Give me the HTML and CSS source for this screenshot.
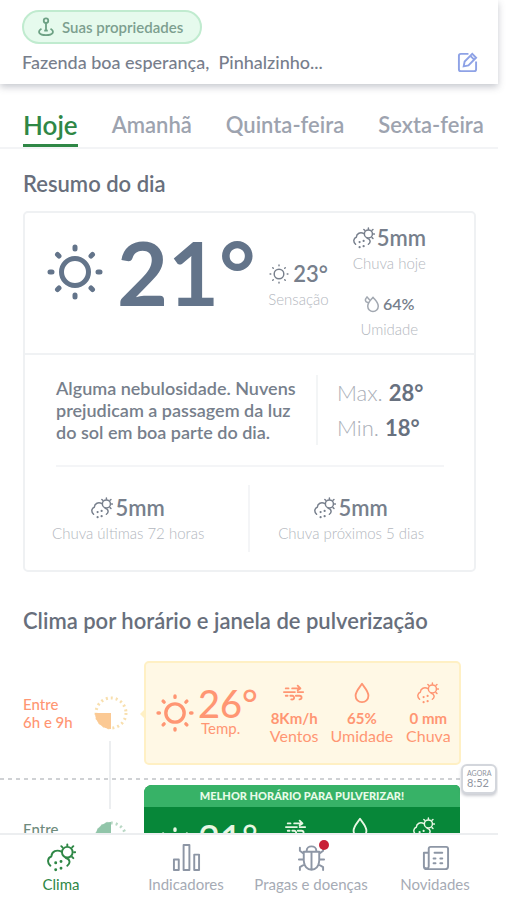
FILE: index.html
```html
<!DOCTYPE html>
<html lang="pt-BR">
<head>
<meta charset="utf-8">
<meta name="viewport" content="width=device-width, initial-scale=1">
<title>Clima</title>
<link rel="stylesheet" href="styles.css">
</head>
<body>
<svg class="sprite" aria-hidden="true">
  <symbol id="sun" viewBox="0 0 56 56">
    <circle cx="28" cy="28" r="13.500"/>
    <path class="rays" d="M28 3v2M28 51v2M3 28h2M51 28h2M10.500 10.500l1.500 1.500M44 44l1.500 1.500M45.500 10.500l-1.500 1.500M12 44l-1.500 1.500"/>
  </symbol>
  <symbol id="rain" viewBox="0 0 30 30">
    <path d="M3.500 23.500C-.5 20 1 15 4.500 14 5 8.500 10 6.500 15 9M19.500 15.500c4.500 1 5 5.500 1.500 8"/>
    <circle cx="21" cy="9.500" r="5.500"/>
    <path d="M21 3V1.500M26 4.500l1.200-1.200M28 9.500h1.200M26 14.500l1.200 1.200M16 4.500l-1.200-1.200"/>
    <path class="drops" d="M9 20.500v.1M14.500 19v.1M9 27.500v.1M14.500 26v.1"/>
  </symbol>
  <symbol id="drop" viewBox="0 0 20 24">
    <path d="M10 2C7 6.500 3 10 3 15a7 7 0 0 0 14 0c0-5-4-8.500-7-13z"/>
  </symbol>
  <symbol id="drops" viewBox="0 0 20 24">
    <path d="M12 3C9 7 5 10 5 15a7 7 0 0 0 14 0c0-5-4-8-7-12zM5 10C1 9 1 6 4 2.500L7 6"/>
  </symbol>
  <symbol id="wind" viewBox="0 0 24 20">
    <path d="M3 5h3M10 5h9M16 2l3 3-3 2M1 9h12M16 9h6M3 13h2M8 13h2c3 0 3 5-1 4M14 13h4c3 0 3 4 0 4"/>
  </symbol>
</svg>

<div class="app">
  <header class="header">
    <button class="pill" type="button">
      <svg class="pin" viewBox="0 0 20 22" aria-hidden="true"><circle cx="10" cy="4" r="2.500"/><path d="M10 6.500v9M5 13c-5 3-3 7 5 7s10-4 5-7"/><path d="M8 15h4"/></svg>
      Suas propriedades
    </button>
    <div class="place">
      <span>Fazenda boa esperança,&nbsp; Pinhalzinho...</span>
      <button class="edit" type="button" aria-label="Editar">
        <svg viewBox="0 0 22 22" aria-hidden="true"><path d="M12 2H4a2 2 0 0 0-2 2v14a2 2 0 0 0 2 2h14a2 2 0 0 0 2-2v-8"/><path d="M7 15l1-5 8-8 4 4-8 8zM14 4l4 4"/></svg>
      </button>
    </div>
  </header>

  <nav class="tabs" aria-label="Dias">
    <a class="tab tab-active" href="#hoje">Hoje</a>
    <a class="tab" href="#amanha">Amanhã</a>
    <a class="tab" href="#quinta">Quinta-feira</a>
    <a class="tab" href="#sexta">Sexta-feira</a>
  </nav>

  <main class="content">
    <h2 class="title">Resumo do dia</h2>
    <section class="summary">
      <div class="now">
        <div class="temp"><svg class="icon sun-big"><use href="#sun"/></svg><span>21°</span></div>
        <div class="stat feels">
          <div class="value"><svg class="icon sun-small"><use href="#sun"/></svg>23°</div>
          <div class="label">Sensação</div>
        </div>
        <div class="pair">
          <div class="stat">
            <div class="value"><svg class="icon rain"><use href="#rain"/></svg>5mm</div>
            <div class="label">Chuva hoje</div>
          </div>
          <div class="stat">
            <div class="value value-small"><svg class="icon drops-small"><use href="#drops"/></svg>64%</div>
            <div class="label">Umidade</div>
          </div>
        </div>
      </div>
      <div class="details">
        <div class="forecast">
          <p class="text">Alguma nebulosidade. Nuvens prejudicam a passagem da luz do sol em boa parte do dia.</p>
          <div class="range">
            <div>Max. <b>28°</b></div>
            <div>Min. <b>18°</b></div>
          </div>
        </div>
        <div class="totals">
          <div class="stat">
            <div class="value"><svg class="icon rain"><use href="#rain"/></svg>5mm</div>
            <div class="label">Chuva últimas 72 horas</div>
          </div>
          <div class="stat">
            <div class="value"><svg class="icon rain"><use href="#rain"/></svg>5mm</div>
            <div class="label">Chuva próximos 5 dias</div>
          </div>
        </div>
      </div>
    </section>

    <h2 class="title title-hours">Clima por horário e janela de pulverização</h2>
    <section class="hours">
      <div class="slot slot-warn">
        <div class="time">Entre<br>6h e 9h</div>
        <svg class="dial" viewBox="0 0 34 34" aria-hidden="true"><circle cx="17" cy="17" r="15"/><path d="M17 17v16A16 16 0 0 1 1 17z"/></svg>
        <article class="hour">
          <div class="metrics">
            <svg class="icon sun-hour"><use href="#sun"/></svg>
            <div class="degrees"><span>26°</span><small>Temp.</small></div>
            <div class="metric"><svg class="icon"><use href="#wind"/></svg><b>8Km/h</b>Ventos</div>
            <div class="metric"><svg class="icon"><use href="#drop"/></svg><b>65%</b>Umidade</div>
            <div class="metric"><svg class="icon"><use href="#rain"/></svg><b>0 mm</b>Chuva</div>
          </div>
        </article>
      </div>
      <div class="marker"><div class="clock"><small>AGORA</small>8:52</div></div>
      <div class="slot slot-best">
        <div class="time">Entre<br>9h e 12h</div>
        <svg class="dial" viewBox="0 0 34 34" aria-hidden="true"><circle cx="17" cy="17" r="15"/><path d="M17 17V1A16 16 0 0 0 1 17z"/></svg>
        <article class="hour">
          <div class="banner">MELHOR HORÁRIO PARA PULVERIZAR!</div>
          <div class="metrics">
            <svg class="icon sun-hour"><use href="#sun"/></svg>
            <div class="degrees"><span>21°</span></div>
            <div class="metric"><svg class="icon"><use href="#wind"/></svg></div>
            <div class="metric"><svg class="icon"><use href="#drop"/></svg></div>
            <div class="metric"><svg class="icon"><use href="#rain"/></svg></div>
          </div>
        </article>
      </div>
    </section>
  </main>

  <nav class="bottom" aria-label="Principal">
    <a class="item item-active" href="#clima"><svg class="icon"><use href="#rain"/></svg>Clima</a>
    <a class="item" href="#indicadores"><svg class="icon" viewBox="0 0 30 30"><path d="M2 17h5v11H2zM12 2h6v26h-6zM23 12h5v16h-5z"/></svg>Indicadores</a>
    <a class="item" href="#pragas"><span class="bug"><svg class="icon" viewBox="0 0 30 30"><path d="M10 8c0-6 10-6 10 0M7 9h16v9c0 13-16 13-16 0zM15 9v18M3 5v3l4 3M27 5v3l-4 3M2 17h5M23 17h5M3 28v-3l5-3M27 28v-3l-5-3"/></svg><i class="dot"></i></span>Pragas e doenças</a>
    <a class="item" href="#novidades"><svg class="icon" viewBox="0 0 30 30"><path d="M8 10H3v14a3 3 0 0 0 3 3h19a3 3 0 0 0 3-3V6a2 2 0 0 0-2-2H10a2 2 0 0 0-2 2v18a2 2 0 0 1-3 2M14 10h8M13 16h2M20 16h2M13 21h2M20 21h2"/></svg>Novidades</a>
  </nav>
</div>
</body>
</html>
```
FILE: styles.css
```css
* { box-sizing: border-box; }

body {
  margin: 0;
  padding-right: 8px;
  background: #fff;
  color: #5b6472;
  font-family: Lato, "Liberation Sans", sans-serif;
}

button {
  font-family: inherit;
  cursor: pointer;
}

a { text-decoration: none; }

.sprite {
  position: absolute;
  width: 0;
  height: 0;
}

.icon {
  flex: none;
  fill: none;
  stroke: currentColor;
  stroke-width: 2;
  stroke-linecap: round;
  stroke-linejoin: round;
}

.drops { stroke-width: 3; }

.app {
  display: flex;
  flex-direction: column;
  height: 100vh;
}

.header {
  z-index: 1;
  padding: 10px 20px 7px 22px;
  box-shadow: 0 3px 7px rgba(70, 75, 95, 0.3);
}

.pill {
  display: flex;
  align-items: center;
  gap: 7px;
  height: 34px;
  padding: 0 17px 0 13px;
  border: 2px solid #c0ebcf;
  border-radius: 17px;
  background: #e6faed;
  color: #7d9f8f;
  font-size: 15px;
  font-weight: 600;
}

.pin {
  width: 18px;
  height: 20px;
  fill: none;
  stroke: #6da184;
  stroke-width: 2;
}

.place {
  display: flex;
  align-items: center;
  justify-content: space-between;
  height: 30px;
  margin-top: 3px;
  font-size: 18px;
  font-weight: 500;
  color: #777e8c;
}

.edit {
  display: flex;
  padding: 0;
  border: 0;
  background: none;
}

.edit svg {
  width: 21px;
  height: 21px;
  fill: none;
  stroke: #8ea2e6;
  stroke-width: 2;
}

.tabs {
  display: flex;
  flex: none;
  align-items: flex-end;
  gap: 34px;
  height: 65px;
  padding-left: 23px;
  border-bottom: 2px solid #f3f4f6;
  overflow: hidden;
}

.tab {
  padding-bottom: 6px;
  border-bottom: 3px solid transparent;
  color: #9da3af;
  font-size: 22px;
  font-weight: 600;
  line-height: 26px;
  white-space: nowrap;
}

.tab-active {
  border-color: #2f8746;
  color: #2f8746;
  font-size: 26px;
}

.content {
  flex: 1;
  min-height: 0;
  padding: 22px 22px 0 23px;
  overflow: hidden;
}

.title {
  margin: 0 0 14px;
  color: #686f7c;
  font-size: 22px;
  font-weight: 600;
  line-height: 26px;
}

.title-hours { margin: 36px 0 27px; }

.summary {
  border: 2px solid #eff1f3;
  border-radius: 5px;
}

.now {
  display: flex;
  align-items: center;
  height: 142px;
  padding: 0 48px 0 22px;
  border-bottom: 2px solid #f0f2f4;
}

.temp {
  display: flex;
  align-items: center;
  gap: 14px;
  margin-bottom: 22px;
  color: #63748a;
  font-size: 88px;
  font-weight: 700;
  line-height: 110px;
}

.sun-big {
  width: 56px;
  height: 56px;
  stroke-width: 5;
}

.stat { text-align: center; }

.value {
  display: flex;
  align-items: center;
  justify-content: center;
  gap: 2px;
  color: #777f8c;
  font-size: 22px;
  font-weight: 600;
  line-height: 26px;
}

.value-small {
  gap: 4px;
  font-size: 16px;
}

.label {
  color: #b3b7be;
  font-size: 15px;
  font-weight: 300;
  line-height: 24px;
}

.feels { margin: 6px 24px 0 auto; }

.feels .value { gap: 4px; }

.sun-small {
  width: 20px;
  height: 20px;
  stroke-width: 4;
}

.rain {
  width: 22px;
  height: 22px;
}

.drops-small {
  width: 15px;
  height: 18px;
  color: #a2a8b1;
}

.pair {
  display: grid;
  gap: 16px;
}

.details { padding: 0 30px 0 31px; }

.forecast {
  display: flex;
  align-items: center;
  height: 112px;
  border-bottom: 2px solid #f4f5f7;
}

.text {
  flex: 1;
  margin: 0;
  padding-right: 18px;
  color: #777f8c;
  font-size: 18px;
  font-weight: 600;
  line-height: 22px;
}

.range {
  width: 128px;
  padding-left: 19px;
  border-left: 2px solid #f3f5f6;
  color: #a9aeb7;
  font-size: 22px;
  font-weight: 300;
  line-height: 35px;
}

.range b {
  color: #68717f;
  font-weight: 700;
}

.totals {
  display: grid;
  grid-template-columns: 1fr 1fr;
  padding: 18px 4px 18px 0;
}

.totals .stat {
  padding: 10px 0 7px;
  white-space: nowrap;
}

.totals .stat:first-child {
  padding-right: 44px;
  margin-left: -4px;
}

.totals .stat + .stat {
  padding-left: 12px;
  border-left: 2px solid #f4f5f7;
}

.slot {
  display: grid;
  grid-template-columns: 71px 34px 1fr;
  padding-right: 16px;
}

.time {
  align-self: center;
  font-size: 15px;
  font-weight: 500;
  line-height: 18px;
}

.slot-warn { color: #ff9673; }

.slot-best .time { color: #6f8b7d; }

.dial {
  align-self: center;
  width: 34px;
  height: 34px;
}

.dial circle {
  fill: none;
  stroke: #f8dfae;
  stroke-width: 3;
  stroke-dasharray: 2 3;
}

.dial path { fill: #fbc994; }

.slot-best .dial circle { stroke: #b9d8c5; }

.slot-best .dial path { fill: #91c5a9; }

.hour {
  position: relative;
  margin-left: 16px;
  border-radius: 5px;
}

.slot-warn .hour {
  height: 104px;
  border: 2px solid #fff0c4;
  background: #fff8e5;
}

.slot-warn .hour::before {
  content: "";
  position: absolute;
  top: 46px;
  left: -6px;
  border: 5px solid transparent;
  border-left-width: 0;
  border-right-color: #fff0c4;
}

.slot-best .hour {
  height: 106px;
  border-top-left-radius: 8px;
  background: #078739;
  color: #e8f7e4;
  overflow: hidden;
}

.banner {
  background: #37b267;
  color: #e9fbe9;
  font-size: 11px;
  font-weight: 900;
  line-height: 22px;
  text-align: center;
}

.metrics {
  display: flex;
  align-items: center;
  height: 100px;
  padding: 0 8px 0 10px;
}

.slot-best .metrics {
  align-items: flex-start;
  padding: 10px 10px 10px 12px;
}

.slot-best .degrees { padding-top: 6px; }

.slot-best .sun-hour { margin-top: 10px; }

.slot-best .metric { min-width: 52px; }

.sun-hour {
  width: 38px;
  height: 38px;
  stroke-width: 5;
}

.degrees {
  display: grid;
  margin: 0 auto 0 4px;
  justify-items: start;
}

.degrees span {
  font-size: 38px;
  font-weight: 500;
  line-height: 30px;
}

.degrees small {
  padding-left: 3px;
  font-size: 15px;
  line-height: 20px;
}

.metric {
  display: grid;
  justify-items: center;
  min-width: 46px;
  margin-left: 12px;
  font-size: 16px;
  line-height: 17px;
}

.metric b { font-size: 15px; }

.metric .icon {
  width: 22px;
  height: 22px;
  margin-bottom: 6px;
}

.marker {
  position: relative;
  display: flex;
  align-items: center;
  height: 20px;
  margin: 0 -22px 0 -23px;
}

.marker::before {
  content: "";
  flex: 1;
  height: 2px;
  margin-top: 8px;
  background: repeating-linear-gradient(90deg, #cfd1d4 0 4px, transparent 4px 8px);
}

.marker::after {
  content: "";
  position: absolute;
  top: -24px;
  left: 109px;
  width: 2px;
  height: 68px;
  background: #eceef0;
}

.clock {
  z-index: 1;
  width: 36px;
  margin: 0 1px -8px 0;
  padding: 3px 4px;
  border: 2px solid #d3d6dc;
  border-radius: 6px;
  background: #fff;
  box-shadow: 0 2px 3px rgba(80, 85, 105, 0.3);
  color: #8f95a0;
  font-size: 11px;
  line-height: 12px;
}

.clock small {
  display: block;
  font-size: 7px;
  line-height: 8px;
}

.bottom {
  z-index: 2;
  display: grid;
  flex: none;
  grid-template-columns: 122px 128px 122px 1fr;
  height: 67px;
  border-top: 2px solid #eceef0;
  background: #fff;
}

.item {
  display: flex;
  flex-direction: column;
  align-items: center;
  gap: 3px;
  padding-top: 8px;
  color: #a6abb5;
  font-size: 15px;
  line-height: 18px;
  white-space: nowrap;
}

.item .icon {
  width: 29px;
  height: 29px;
  color: #8d96a5;
}

.item-active,
.item-active .icon { color: #2f8746; }

.bug {
  position: relative;
  display: flex;
}

.dot {
  position: absolute;
  top: -3px;
  right: -3px;
  width: 10px;
  height: 10px;
  border-radius: 50%;
  background: #c81f36;
}
```
